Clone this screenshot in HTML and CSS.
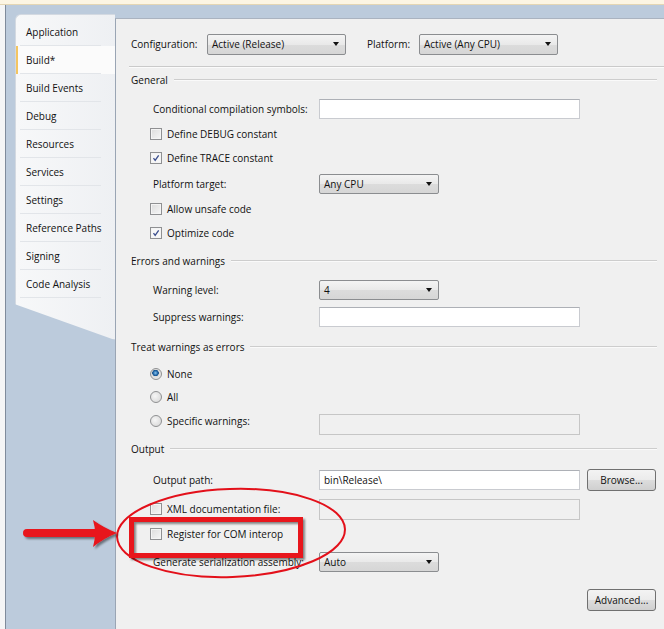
FILE: index.html
```html
<!DOCTYPE html>
<html lang="en">
<head>
    <meta charset="UTF-8">
    <title>Build properties</title>
    <link rel="stylesheet" href="styles.css">
</head>
<body>

<div class="titlebar"></div>

<div class="window">
    <div class="edge"></div>

    <div class="workspace">
        <!-- Property page tabs -->
        <nav class="tabs">
            <div class="tab">Application</div>
            <div class="tab tab--active">Build*</div>
            <div class="tab">Build Events</div>
            <div class="tab">Debug</div>
            <div class="tab">Resources</div>
            <div class="tab">Services</div>
            <div class="tab">Settings</div>
            <div class="tab">Reference Paths</div>
            <div class="tab">Signing</div>
            <div class="tab">Code Analysis</div>
        </nav>

        <main class="page">
            <div class="config">
                <span class="config__label">Configuration:</span>
                <div class="select select--config"><span>Active (Release)</span><i class="caret"></i></div>
                <span class="config__label config__label--platform">Platform:</span>
                <div class="select select--config"><span>Active (Any CPU)</span><i class="caret"></i></div>
            </div>
            <div class="rule"></div>

            <!-- General -->
            <div class="group-head mt-1">General</div>
            <div class="field mt-7">
                <span class="field__label">Conditional compilation symbols:</span>
                <div class="input"></div>
            </div>
            <div class="field field--check">
                <span class="check"></span><span>Define DEBUG constant</span>
            </div>
            <div class="field field--check mt-2">
                <span class="check check--on"><svg viewBox="0 0 12 12"><path d="M3 6.2 L5 8.8 L9.2 2.8" /></svg></span><span>Define TRACE constant</span>
            </div>
            <div class="field mt-4">
                <span class="field__label">Platform target:</span>
                <div class="select"><span>Any CPU</span><i class="caret"></i></div>
            </div>
            <div class="field field--check">
                <span class="check"></span><span>Allow unsafe code</span>
            </div>
            <div class="field field--check mt-2">
                <span class="check check--on"><svg viewBox="0 0 12 12"><path d="M3 6.2 L5 8.8 L9.2 2.8" /></svg></span><span>Optimize code</span>
            </div>

            <!-- Errors and warnings -->
            <div class="group-head">Errors and warnings</div>
            <div class="field mt-7">
                <span class="field__label">Warning level:</span>
                <div class="select"><span>4</span><i class="caret"></i></div>
            </div>
            <div class="field mt-5">
                <span class="field__label">Suppress warnings:</span>
                <div class="input"></div>
            </div>

            <!-- Treat warnings as errors -->
            <div class="group-head mt-8">Treat warnings as errors</div>
            <div class="field field--check mt-5">
                <span class="radio radio--on"></span><span>None</span>
            </div>
            <div class="field field--check mt-1">
                <span class="radio"></span><span>All</span>
            </div>
            <div class="field field--check mt-2">
                <span class="radio"></span><span class="field__label field__label--radio">Specific warnings:</span>
                <div class="input input--off input--low"></div>
            </div>

            <!-- Output -->
            <div class="group-head">Output</div>
            <div class="field mt-9">
                <span class="field__label">Output path:</span>
                <div class="input"><span>bin\Release\</span></div>
                <button class="button">Browse...</button>
            </div>
            <div class="field field--check mt-7">
                <span class="check"></span><span class="field__label field__label--radio">XML documentation file:</span>
                <div class="input input--off"></div>
            </div>
            <div class="field field--check">
                <span class="check"></span><span>Register for COM interop</span>
            </div>
            <div class="field mt-6">
                <span class="field__label">Generate serialization assembly:</span>
                <div class="select"><span>Auto</span><i class="caret"></i></div>
            </div>
            <div class="actions">
                <button class="button">Advanced...</button>
            </div>
        </main>
    </div>
</div>

<!-- Red markup drawn over the screenshot -->
<svg class="markup" width="664" height="629" viewBox="0 0 664 629">
    <defs>
        <filter id="shade" x="-10%" y="-30%" width="130%" height="180%">
            <feDropShadow dx="2" dy="2" stdDeviation="1.2" flood-color="#000" flood-opacity="0.45"/>
        </filter>
    </defs>
    <ellipse cx="231" cy="533" rx="114" ry="44" transform="rotate(-2 231 533)" fill="none" stroke="#e3101a" stroke-width="2"/>
    <rect x="131.5" y="519.5" width="169" height="36" fill="none" stroke="#e8161c" stroke-width="5" filter="url(#shade)"/>
    <g filter="url(#shade)" fill="#e8141b">
        <line x1="27" y1="533" x2="97" y2="533" stroke="#e8141b" stroke-width="8" stroke-linecap="round"/>
        <path d="M93 520 Q104 528 117 533 Q104 538 93 547 Q97 533 93 520 Z"/>
    </g>
</svg>

</body>
</html>
```

FILE: styles.css
```css
/* Base */
body { margin: 0; height: 629px; overflow: hidden; position: relative; background: #bccbdc; color: #111; font: 10px "Open Sans", "Noto Sans", sans-serif; white-space: nowrap; }

/* Window chrome */
.titlebar { height: 4px; background: #fcf5e3; border-bottom: 1px solid #e4d6b4; }
.window { display: flex; height: 624px; }
.edge { width: 5px; background: #f4f5f6; border-right: 1px solid #7f8b9b; }
.workspace { flex: 1; display: flex; align-items: flex-start; padding: 9px 0 0 9px; }

/* Tabs on the left */
.tabs { box-sizing: border-box; width: 100px; height: 326px; padding-top: 3px; background: linear-gradient(90deg, #f7f8f9, #eef0f3); border: 1px solid #d3d9e1; border-right: 0; border-radius: 6px 0 0 0; clip-path: polygon(0 0, 100% 0, 100% 100%, 0 89%); }
.tab { position: relative; height: 28px; line-height: 28px; padding-left: 10px; }
.tab::after { content: ""; position: absolute; left: 4px; right: 14px; bottom: 0; border-bottom: 1px solid #e2e5e9; }
.tab--active { background: #fbfbfb; box-shadow: inset 2px 0 0 #f3c561; }

/* Property page */
.page { flex: 1; align-self: stretch; margin-top: 4px; padding: 14px 7px 0 15px; background: #f0f0f0; border-left: 1px solid #9aa5b4; border-top: 1px solid #aab3c0; }

.config { display: flex; align-items: center; height: 22px; }
.config__label { width: 76px; }
.config__label--platform { width: 52px; margin-left: 21px; }
.rule { margin: 11px -7px 0 -2px; border-top: 1px solid #cacaca; border-bottom: 1px solid #fbfbfb; }

.group-head { display: flex; align-items: center; gap: 6px; height: 22px; margin-top: 6px; }
.group-head::after { content: ""; flex: 1; border-top: 1px solid #cdcdcd; border-bottom: 1px solid #fafafa; }

.field { display: flex; align-items: center; height: 22px; margin-top: 3px; padding-left: 22px; }
.field--check { padding-left: 19px; }
.field__label { width: 166px; flex: none; }
.field__label--radio { width: 152px; }

.mt-1 { margin-top: 1px; }
.mt-2 { margin-top: 2px; }
.mt-4 { margin-top: 4px; }
.mt-5 { margin-top: 5px; }
.mt-6 { margin-top: 6px; }
.mt-7 { margin-top: 7px; }
.mt-8 { margin-top: 8px; }
.mt-9 { margin-top: 9px; }

/* Controls */
.input { box-sizing: border-box; width: 261px; height: 20px; padding-left: 4px; display: flex; align-items: center; background: #fff; border: 1px solid #c9cbd0; border-top-color: #adb0b6; }
.input--off { background: #f0f0f0; border-color: #c6c6c6; height: 21px; }
.input--low { margin-top: 7px; }

.select { box-sizing: border-box; width: 120px; height: 20px; display: flex; align-items: center; justify-content: space-between; padding: 0 6px 0 4px; border: 1px solid #8b8d90; border-radius: 2px; background: linear-gradient(#f4f4f4, #e9e9e9 50%, #dcdcdc 51%, #d6d6d6); }
.select--config { width: 139px; height: 21px; }
.caret { width: 0; height: 0; border-left: 3.5px solid transparent; border-right: 3.5px solid transparent; border-top: 4px solid #111; }

.check { box-sizing: border-box; width: 12px; height: 12px; margin-right: 5px; flex: none; border: 1px solid #8f9092; background: linear-gradient(135deg, #dcdcdc, #f6f6f6); box-shadow: inset 0 0 0 1px #f4f4f4; }
.check svg { display: block; width: 10px; height: 10px; }
.check svg path { fill: none; stroke: #3c4f8e; stroke-width: 1.6; }
.check--on { background: #f7f7f7; }

.radio { box-sizing: border-box; width: 12px; height: 12px; margin-right: 5px; flex: none; border-radius: 50%; border: 1px solid #8f9092; background: radial-gradient(circle at 40% 40%, #f6f6f6, #d4d4d4); }
.radio--on { background: radial-gradient(circle at 45% 40%, #8ac6ee 0, #2a6fb0 2px, #14508a 3px, #dcdcdc 3.5px, #f2f2f2); }

.button { box-sizing: border-box; width: 69px; height: 22px; margin-left: 7px; padding: 0; font: inherit; color: #111; border: 1px solid #707070; border-radius: 3px; background: linear-gradient(#f3f3f3, #ebebeb 50%, #dddddd 51%, #cfcfcf); }
.actions { display: flex; justify-content: flex-end; margin-top: 16px; padding-right: 1px; }

/* Annotation layer */
.markup { position: absolute; top: 0; left: 0; pointer-events: none; }
```
